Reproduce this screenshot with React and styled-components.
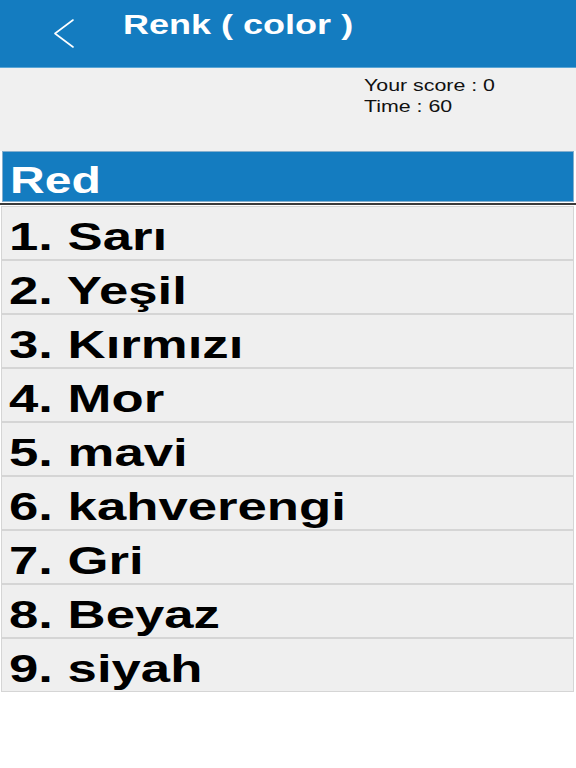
import React from "react";
import styled, { createGlobalStyle } from "styled-components";

const colors = [
  "Sarı",
  "Yeşil",
  "Kırmızı",
  "Mor",
  "mavi",
  "kahverengi",
  "Gri",
  "Beyaz",
  "siyah",
];

const GlobalStyle = createGlobalStyle`
  html, body {
    margin: 0;
    padding: 0;
    background: #ffffff;
    font-family: "Liberation Sans", Arial, sans-serif;
  }
`;

const Screen = styled.div`
  width: 576px;
  min-height: 768px;
  background: #ffffff;
`;

const Header = styled.header`
  height: 68px;
  box-sizing: border-box;
  background: #147cc0;
  display: flex;
  align-items: flex-start;
  padding-left: 54px;
  border-bottom: 1px solid #5aa6d6;
`;

const BackIcon = styled.svg`
  width: 20px;
  height: 29px;
  margin-top: 19px;
  flex-shrink: 0;
`;

const Title = styled.h1`
  margin: 0 0 0 49px;
  padding-top: 12px;
  font-size: 27px;
  line-height: 27px;
  font-weight: bold;
  color: #ffffff;
`;

// the screenshot is stretched sideways, so every label is widened the same way
const Wide = styled.span`
  display: inline-block;
  white-space: nowrap;
  transform-origin: left center;
  transform: scaleX(1.334);
`;

const InfoArea = styled.section`
  height: 83px;
  box-sizing: border-box;
  background: #f0f0f0;
  display: flex;
  justify-content: flex-start;
  padding: 8px 0 0 364px;
`;

const Score = styled.div`
  font-size: 16px;
  line-height: 20.5px;
  color: #111111;
`;

const QuestionBar = styled.div`
  height: 51px;
  margin: 0 2px;
  box-sizing: border-box;
  background: #147cc0;
  border: 1px solid #86afcd;
  padding: 7px 0 0 7px;
  font-size: 36px;
  line-height: 44px;
  font-weight: bold;
  color: #ffffff;
`;

const Divider = styled.div`
  height: 2px;
  margin-top: 1px;
  background: #3a3a3a;
`;

const List = styled.ol`
  list-style: none;
  margin: 1px 0 0;
  padding: 0 2px 0 1px;
`;

const Row = styled.li`
  height: 54px;
  box-sizing: border-box;
  background: #efefef;
  border: 1px solid #d5d5d5;
  padding: 7px 0 0 7px;
  font-size: 39.5px;
  line-height: 45px;
  font-weight: bold;
  color: #000000;
`;

export default function App() {
  return (
    <>
      <GlobalStyle />
      <Screen>
        <Header>
          <BackIcon viewBox="0 0 20 29" fill="none">
            <polyline
              points="19,1 1,14.5 19,28"
              stroke="#ffffff"
              strokeWidth="1.6"
              strokeLinecap="round"
              strokeLinejoin="round"
            />
          </BackIcon>
          <Title>
            <Wide>Renk ( color )</Wide>
          </Title>
        </Header>
        <InfoArea>
          <Score>
            <div>
              <Wide>Your score : 0</Wide>
            </div>
            <div>
              <Wide>Time : 60</Wide>
            </div>
          </Score>
        </InfoArea>
        <QuestionBar>
          <Wide>Red</Wide>
        </QuestionBar>
        <Divider />
        <List>
          {colors.map((name, i) => (
            <Row key={name}>
              <Wide>
                {i + 1}. {name}
              </Wide>
            </Row>
          ))}
        </List>
      </Screen>
    </>
  );
}
